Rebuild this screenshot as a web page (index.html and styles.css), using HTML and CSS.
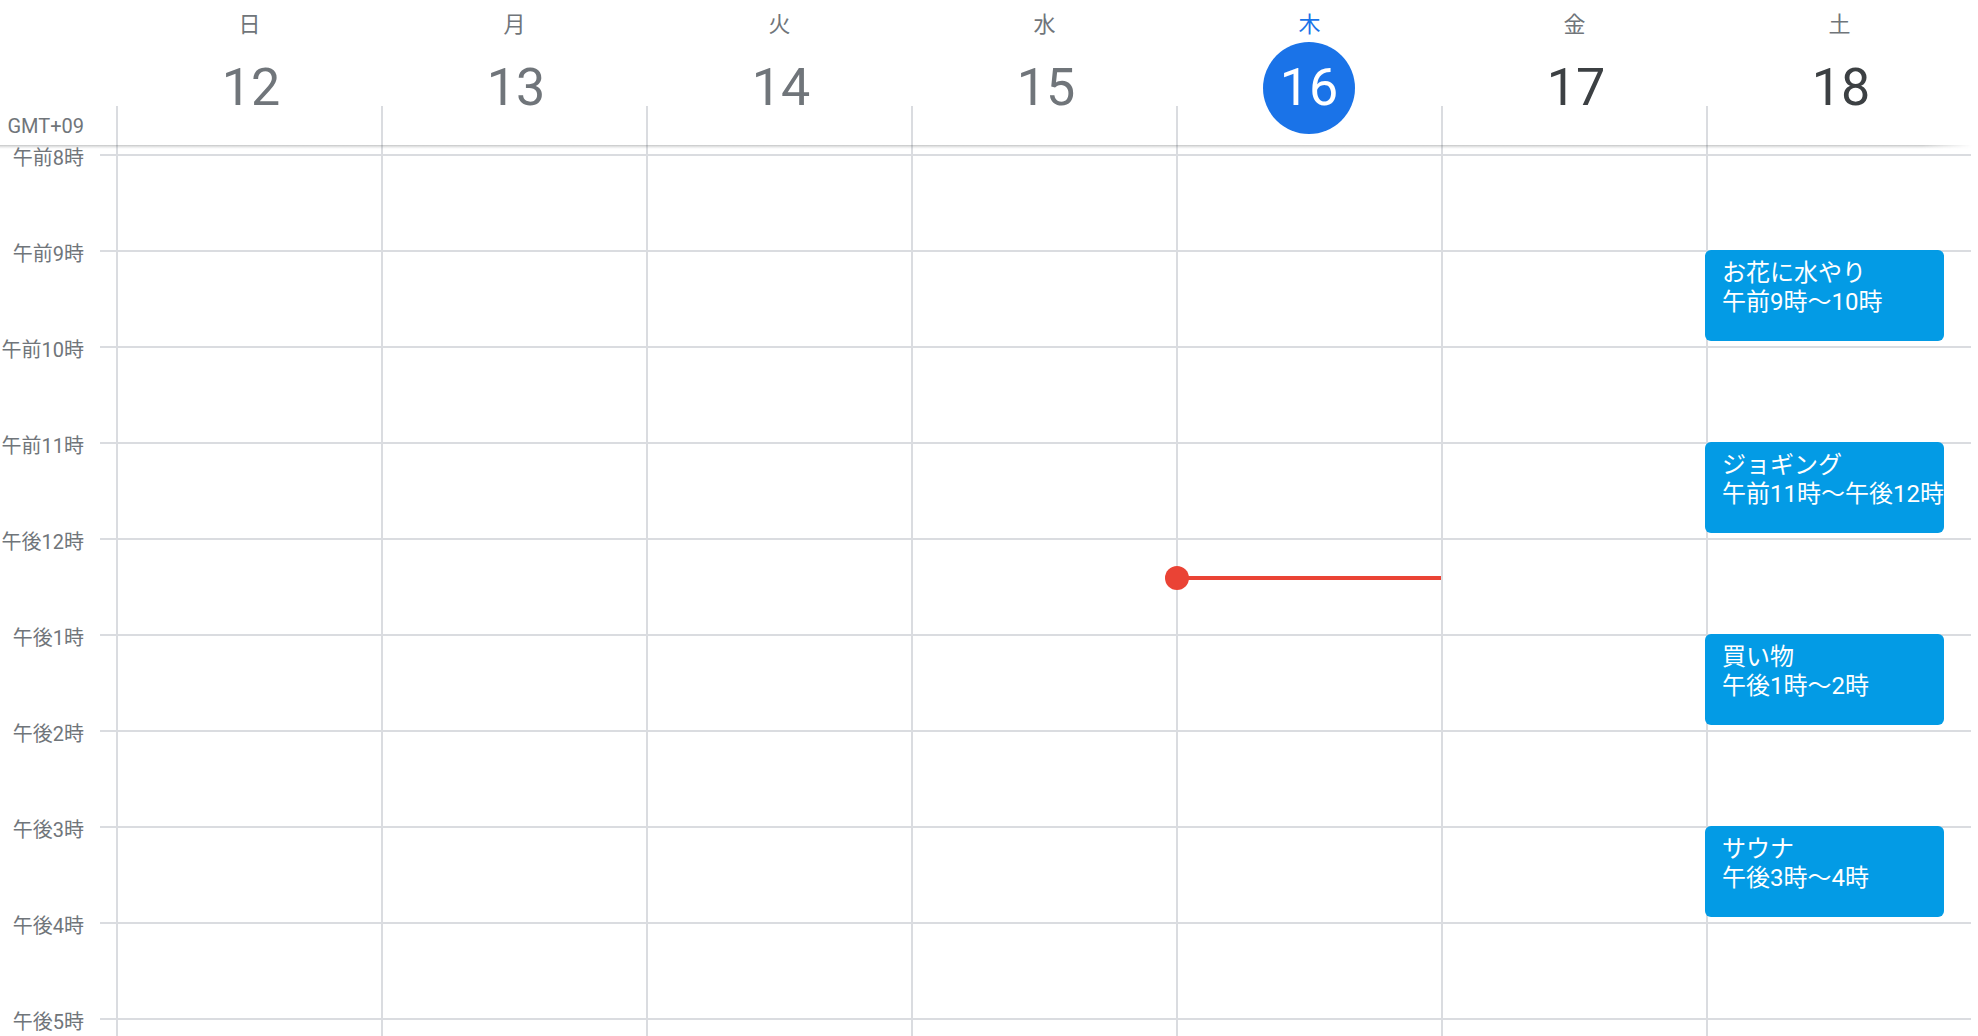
FILE: index.html
```html
<!DOCTYPE html>
<html lang="ja">
<head>
<meta charset="utf-8">
<title>週表示カレンダー</title>
<link rel="stylesheet" href="styles.css">
</head>
<body>
<div class="cal">
  <div class="header">
    <div class="hcell gutter-head">
      <div class="tz">GMT+09</div>
    </div>
    <div class="hcell">
      <div class="dayname">日</div>
      <div class="daynum past">12</div>
      <div class="strip"></div>
    </div>
    <div class="hcell">
      <div class="dayname">月</div>
      <div class="daynum past">13</div>
      <div class="strip"></div>
    </div>
    <div class="hcell">
      <div class="dayname">火</div>
      <div class="daynum past">14</div>
      <div class="strip"></div>
    </div>
    <div class="hcell">
      <div class="dayname">水</div>
      <div class="daynum past">15</div>
      <div class="strip"></div>
    </div>
    <div class="hcell">
      <div class="dayname today">木</div>
      <div class="daynum today">16</div>
      <div class="strip"></div>
    </div>
    <div class="hcell">
      <div class="dayname">金</div>
      <div class="daynum">17</div>
      <div class="strip"></div>
    </div>
    <div class="hcell">
      <div class="dayname">土</div>
      <div class="daynum">18</div>
      <div class="strip"></div>
    </div>
  </div>
  <div class="shadow"></div>
  <div class="body">
    <div class="gutter">
      <div class="trow"><div class="tlabel">午前8時</div><div class="tick"></div></div>
      <div class="trow"><div class="tlabel">午前9時</div><div class="tick"></div></div>
      <div class="trow"><div class="tlabel">午前10時</div><div class="tick"></div></div>
      <div class="trow"><div class="tlabel">午前11時</div><div class="tick"></div></div>
      <div class="trow"><div class="tlabel">午後12時</div><div class="tick"></div></div>
      <div class="trow"><div class="tlabel">午後1時</div><div class="tick"></div></div>
      <div class="trow"><div class="tlabel">午後2時</div><div class="tick"></div></div>
      <div class="trow"><div class="tlabel">午後3時</div><div class="tick"></div></div>
      <div class="trow"><div class="tlabel">午後4時</div><div class="tick"></div></div>
      <div class="trow"><div class="tlabel">午後5時</div><div class="tick"></div></div>
    </div>

    <div class="day">
      <div class="slot"></div><div class="slot"></div><div class="slot"></div><div class="slot"></div><div class="slot"></div>
      <div class="slot"></div><div class="slot"></div><div class="slot"></div><div class="slot"></div><div class="slot"></div>
    </div>
    <div class="day">
      <div class="slot"></div><div class="slot"></div><div class="slot"></div><div class="slot"></div><div class="slot"></div>
      <div class="slot"></div><div class="slot"></div><div class="slot"></div><div class="slot"></div><div class="slot"></div>
    </div>
    <div class="day">
      <div class="slot"></div><div class="slot"></div><div class="slot"></div><div class="slot"></div><div class="slot"></div>
      <div class="slot"></div><div class="slot"></div><div class="slot"></div><div class="slot"></div><div class="slot"></div>
    </div>
    <div class="day">
      <div class="slot"></div><div class="slot"></div><div class="slot"></div><div class="slot"></div><div class="slot"></div>
      <div class="slot"></div><div class="slot"></div><div class="slot"></div><div class="slot"></div><div class="slot"></div>
    </div>
    <div class="day day-today">
      <div class="slot"></div><div class="slot"></div><div class="slot"></div><div class="slot"></div><div class="slot"></div>
      <div class="slot"></div><div class="slot"></div><div class="slot"></div><div class="slot"></div><div class="slot"></div>
      <div class="nowline"><div class="nowdot"></div></div>
    </div>
    <div class="day">
      <div class="slot"></div><div class="slot"></div><div class="slot"></div><div class="slot"></div><div class="slot"></div>
      <div class="slot"></div><div class="slot"></div><div class="slot"></div><div class="slot"></div><div class="slot"></div>
    </div>
    <div class="day">
      <div class="slot"></div>
      <div class="slot"><div class="event"><div class="etitle">お花に水やり</div><div class="etime">午前9時〜10時</div></div></div>
      <div class="slot"></div>
      <div class="slot"><div class="event"><div class="etitle">ジョギング</div><div class="etime">午前11時〜午後12時</div></div></div>
      <div class="slot"></div>
      <div class="slot"><div class="event"><div class="etitle">買い物</div><div class="etime">午後1時〜2時</div></div></div>
      <div class="slot"></div>
      <div class="slot"><div class="event"><div class="etitle">サウナ</div><div class="etime">午後3時〜4時</div></div></div>
      <div class="slot"></div>
      <div class="slot"></div>
    </div>
  </div>
</div>
</body>
</html>
```

FILE: styles.css
```css
* { box-sizing: border-box; }

html, body {
  margin: 0;
  padding: 0;
  background: #fff;
}

body {
  font-family: Roboto, "Noto Sans CJK JP", sans-serif;
  color: #3c4043;
}

.cal {
  width: 1978px;
  height: 1036px;
  overflow: hidden;
}

/* ---------- header ---------- */
.header {
  display: grid;
  grid-template-columns: 116px repeat(7, 265px);
  height: 146px;
}

.hcell {
  display: flex;
  flex-direction: column;
  align-items: center;
  padding-top: 9px;
}

.gutter-head {
  justify-content: flex-end;
  align-items: stretch;
  padding-top: 0;
}

.tz {
  height: 40px;
  line-height: 40px;
  font-size: 20px;
  color: #70757a;
  text-align: right;
  padding-right: 16px;
  width: 100px;
}

.dayname {
  height: 32px;
  line-height: 32px;
  font-size: 22px;
  color: #70757a;
  padding-left: 2px;
}

.dayname.today {
  color: #1a73e8;
}

.daynum {
  width: 92px;
  height: 92px;
  margin-top: 1px;
  margin-bottom: -28px;
  padding-left: 5px;
  border-radius: 50%;
  line-height: 92px;
  text-align: center;
  font-size: 52px;
  color: #3c4043;
  position: relative;
  z-index: 1;
}

.daynum.past {
  color: #70757a;
}

.daynum.today {
  padding-left: 1px;
  background: #1a73e8;
  color: #fff;
}

.strip {
  align-self: stretch;
  height: 40px;
  border-left: 2px solid #dadce0;
}

.shadow {
  width: 1972px;
  height: 4px;
  margin-top: -1px;
  margin-bottom: -3px;
  background: linear-gradient(to bottom, rgba(60, 64, 67, 0.3), rgba(60, 64, 67, 0.1) 50%, rgba(60, 64, 67, 0));
  -webkit-mask-image: linear-gradient(to right, #000 calc(100% - 50px), transparent);
  mask-image: linear-gradient(to right, #000 calc(100% - 50px), transparent);
  position: relative;
  z-index: 2;
}

/* ---------- body ---------- */
.body {
  display: grid;
  grid-template-columns: 116px repeat(7, 265px);
  height: 890px;
}

.gutter {
  padding-top: 8px;
}

.trow {
  display: flex;
  height: 96px;
}

.tlabel {
  flex: 1;
  align-self: flex-start;
  margin-top: -8px;
  height: 24px;
  line-height: 24px;
  font-size: 20px;
  color: #70757a;
  text-align: right;
  padding-right: 16px;
  white-space: nowrap;
}

.tick {
  width: 16px;
  border-top: 2px solid #dadce0;
}

.day {
  border-left: 2px solid #dadce0;
  padding-top: 8px;
  position: relative;
}

.slot {
  height: 96px;
  border-top: 2px solid #dadce0;
}

.event {
  width: 239px;
  height: 91px;
  margin-top: -2px;
  margin-left: -3px;
  background: #039be5;
  border-radius: 6px;
  color: #fff;
  font-size: 24px;
  line-height: 29px;
  padding: 9px 0 0 17px;
  overflow: hidden;
  white-space: nowrap;
  position: relative;
  z-index: 1;
}

.nowline {
  position: absolute;
  left: -2px;
  right: 0;
  top: 430px;
  height: 4px;
  background: #ea4335;
  z-index: 2;
}

.nowdot {
  position: absolute;
  left: -11px;
  top: -10px;
  width: 24px;
  height: 24px;
  border-radius: 50%;
  background: #ea4335;
}
```
